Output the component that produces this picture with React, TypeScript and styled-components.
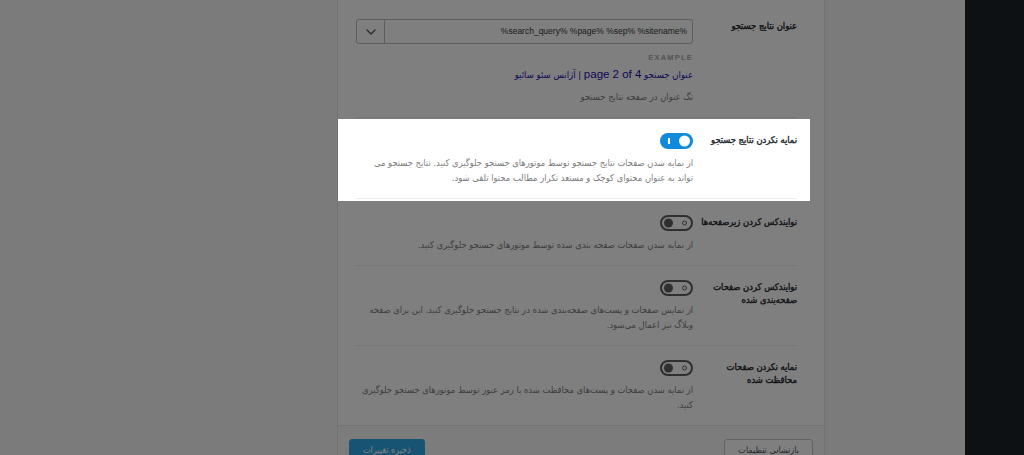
import React from "react";
import styled, { createGlobalStyle, css } from "styled-components";

const Global = createGlobalStyle`
  html, body {
    margin: 0;
    padding: 0;
    width: 1024px;
    height: 455px;
    overflow: hidden;
    background: #f6f7f8;
  }
  * { box-sizing: border-box; }
`;

const fa = `"DejaVu Sans Condensed", "DejaVu Sans", sans-serif`;
const latin = `"Liberation Sans", "DejaVu Sans", sans-serif`;

const Screen = styled.div`
  direction: rtl;
  display: flex;
  align-items: stretch;
  width: 1024px;
  height: 455px;
  overflow: hidden;
  background: #f6f7f8;
  font-family: ${fa};
`;

const AdminMenu = styled.nav`
  flex: 0 0 59px;
  background: #1d2327;
`;

const TabsGutter = styled.div`
  flex: 0 0 140px;
`;

const Panel = styled.section`
  flex: 0 0 488px;
  display: flex;
  flex-direction: column;
  background: #fff;
  border-left: 1px solid #e3e5e8;
  border-right: 1px solid #e3e5e8;
`;

const Rows = styled.div`
  padding-top: 5px;
  flex: 1 1 auto;
`;

const Row = styled.div<{ $spot?: boolean }>`
  margin-right: 14px;
  padding: 0 13px 0 18px;
  background: #fff;
  ${(p) =>
    p.$spot &&
    css`
      position: relative;
      z-index: 20;
      margin-top: 1px;
      padding-bottom: 2px;
    `}
`;

const RowInner = styled.div<{ $last?: boolean }>`
  display: grid;
  grid-template-columns: 100px 1fr;
  column-gap: 4px;
  padding: 14px 0 13px;
  border-bottom: ${(p) => (p.$last ? "none" : "1px solid #ececec")};
`;

const Label = styled.div`
  font-size: 9.3px;
  font-weight: 400;
  -webkit-text-stroke: 0.38px #23282d;
  line-height: 13px;
  color: #23282d;
  span {
    display: block;
    white-space: nowrap;
  }
`;

const Control = styled.div`
  display: flex;
  flex-direction: column;
  align-items: flex-start;
`;

const Desc = styled.p<{ $gap?: number }>`
  margin: ${(p) => p.$gap ?? 6}px 0 0;
  font-size: 9.3px;
  line-height: 15px;
  color: #7c7c7c;
`;

const InputGroup = styled.div`
  display: flex;
  width: 100%;
  height: 25px;
  border: 1px solid #b9bcbf;
  border-radius: 3px;
  background: #fff;
`;

const InputText = styled.div`
  flex: 1 1 auto;
  direction: ltr;
  text-align: right;
  padding: 0 5px;
  font-family: ${latin};
  font-size: 8.5px;
  line-height: 23px;
  color: #32373c;
`;

const DropButton = styled.div`
  flex: 0 0 28px;
  display: flex;
  align-items: center;
  justify-content: center;
  border-right: 1px solid #b9bcbf;
`;

const ExampleTag = styled.div`
  width: 100%;
  margin-top: 9px;
  direction: ltr;
  text-align: right;
  font-family: ${latin};
  font-size: 7.5px;
  font-weight: 700;
  letter-spacing: 1.2px;
  line-height: 10px;
  color: #a7aaad;
`;

const ExampleLink = styled.div`
  margin-top: 2px;
  font-size: 9.5px;
  line-height: 18px;
  color: #1a0dab;
  span {
    font-family: ${latin};
    font-size: 11.5px;
  }
`;

const Switch = styled.span<{ $on?: boolean }>`
  position: relative;
  display: block;
  width: 33px;
  height: 16px;
  border-radius: 8px;
  ${(p) =>
    p.$on
      ? css`
          background: #108bdc;
        `
      : css`
          background: #fff;
          border: 2px solid #5f5f5f;
        `}
`;

const Knob = styled.span<{ $on?: boolean }>`
  position: absolute;
  top: 50%;
  transform: translateY(-50%);
  border-radius: 50%;
  ${(p) =>
    p.$on
      ? css`
          right: 3px;
          width: 11px;
          height: 11px;
          background: #fff;
        `
      : css`
          left: 2px;
          width: 9px;
          height: 9px;
          background: #5f5f5f;
        `}
`;

const Mark = styled.span<{ $on?: boolean }>`
  position: absolute;
  top: 50%;
  transform: translateY(-50%);
  ${(p) =>
    p.$on
      ? css`
          left: 8px;
          width: 1.5px;
          height: 6px;
          background: #fff;
        `
      : css`
          right: 4px;
          width: 5px;
          height: 5px;
          border-radius: 50%;
          border: 1.3px solid #5f5f5f;
        `}
`;

const Footer = styled.footer`
  display: flex;
  justify-content: space-between;
  align-items: flex-start;
  flex: 0 0 31px;
  padding: 13px 11px 0;
  border-top: 1px solid #e5e5e5;
  background: #f9f9f9;
`;

const Button = styled.button<{ $primary?: boolean }>`
  height: 22px;
  padding: 0 13px;
  font-family: ${fa};
  font-size: 9px;
  line-height: 20px;
  border-radius: 3px;
  cursor: pointer;
  ${(p) =>
    p.$primary
      ? css`
          background: #2fa8e6;
          border: 1px solid #2fa8e6;
          color: #fff;
        `
      : css`
          background: #fff;
          border: 1px solid #c3c4c7;
          color: #50575e;
        `}
`;

const Overlay = styled.div`
  position: fixed;
  inset: 0;
  z-index: 10;
  background: rgba(0, 0, 0, 0.5);
`;

const Toggle = ({ on }: { on?: boolean }) => (
  <Switch $on={on}>
    <Mark $on={on} />
    <Knob $on={on} />
  </Switch>
);

const Chevron = () => (
  <svg width="10" height="6" viewBox="0 0 10 6" fill="none">
    <path d="M1 1l4 4 4-4" stroke="#50575e" strokeWidth="1.4" strokeLinecap="round" strokeLinejoin="round" />
  </svg>
);

type Setting = { label: string[]; desc: string; on?: boolean; spot?: boolean };

const settings: Setting[] = [
  {
    label: ["نمایه نکردن نتایج جستجو"],
    desc: "از نمایه شدن صفحات نتایج جستجو توسط موتورهای جستجو جلوگیری کنید. نتایج جستجو می تواند به عنوان محتوای کوچک و مستعد تکرار مطالب محتوا تلقی شود.",
    on: true,
    spot: true,
  },
  {
    label: ["نوایندکس کردن زیرصفحه‌ها"],
    desc: "از نمایه شدن صفحات صفحه بندی شده توسط موتورهای جستجو جلوگیری کنید.",
  },
  {
    label: ["نوایندکس کردن صفحات", "صفحه‌بندی شده"],
    desc: "از نمایش صفحات و پست‌های صفحه‌بندی شده در نتایج جستجو جلوگیری کنید. این برای صفحه وبلاگ نیز اعمال می‌شود.",
  },
  {
    label: ["نمایه نکردن صفحات", "محافظت شده"],
    desc: "از نمایه شدن صفحات و پست‌های محافظت شده با رمز عبور توسط موتورهای جستجو جلوگیری کنید.",
  },
];

export default function App() {
  return (
    <>
      <Global />
      <Screen>
        <AdminMenu />
        <TabsGutter />
        <Panel>
          <Rows>
            <Row>
              <RowInner>
                <Label>
                  <span>عنوان نتایج جستجو</span>
                </Label>
                <Control>
                  <InputGroup>
                    <InputText>%search_query% %page% %sep% %sitename%</InputText>
                    <DropButton>
                      <Chevron />
                    </DropButton>
                  </InputGroup>
                  <ExampleTag>EXAMPLE</ExampleTag>
                  <ExampleLink>
                    عنوان جستجو <span>page 2 of 4</span> | آژانس سئو سائیو
                  </ExampleLink>
                  <Desc $gap={5}>تگ عنوان در صفحه نتایج جستجو</Desc>
                </Control>
              </RowInner>
            </Row>
            {settings.map((s, i) => (
              <Row key={s.label.join(" ")} $spot={s.spot}>
                <RowInner $last={i === settings.length - 1}>
                  <Label>
                    {s.label.map((line) => (
                      <span key={line}>{line}</span>
                    ))}
                  </Label>
                  <Control>
                    <Toggle on={s.on} />
                    <Desc>{s.desc}</Desc>
                  </Control>
                </RowInner>
              </Row>
            ))}
          </Rows>
          <Footer>
            <Button>بازنشانی تنظیمات</Button>
            <Button $primary>ذخیره تغییرات</Button>
          </Footer>
        </Panel>
      </Screen>
      <Overlay />
    </>
  );
}
